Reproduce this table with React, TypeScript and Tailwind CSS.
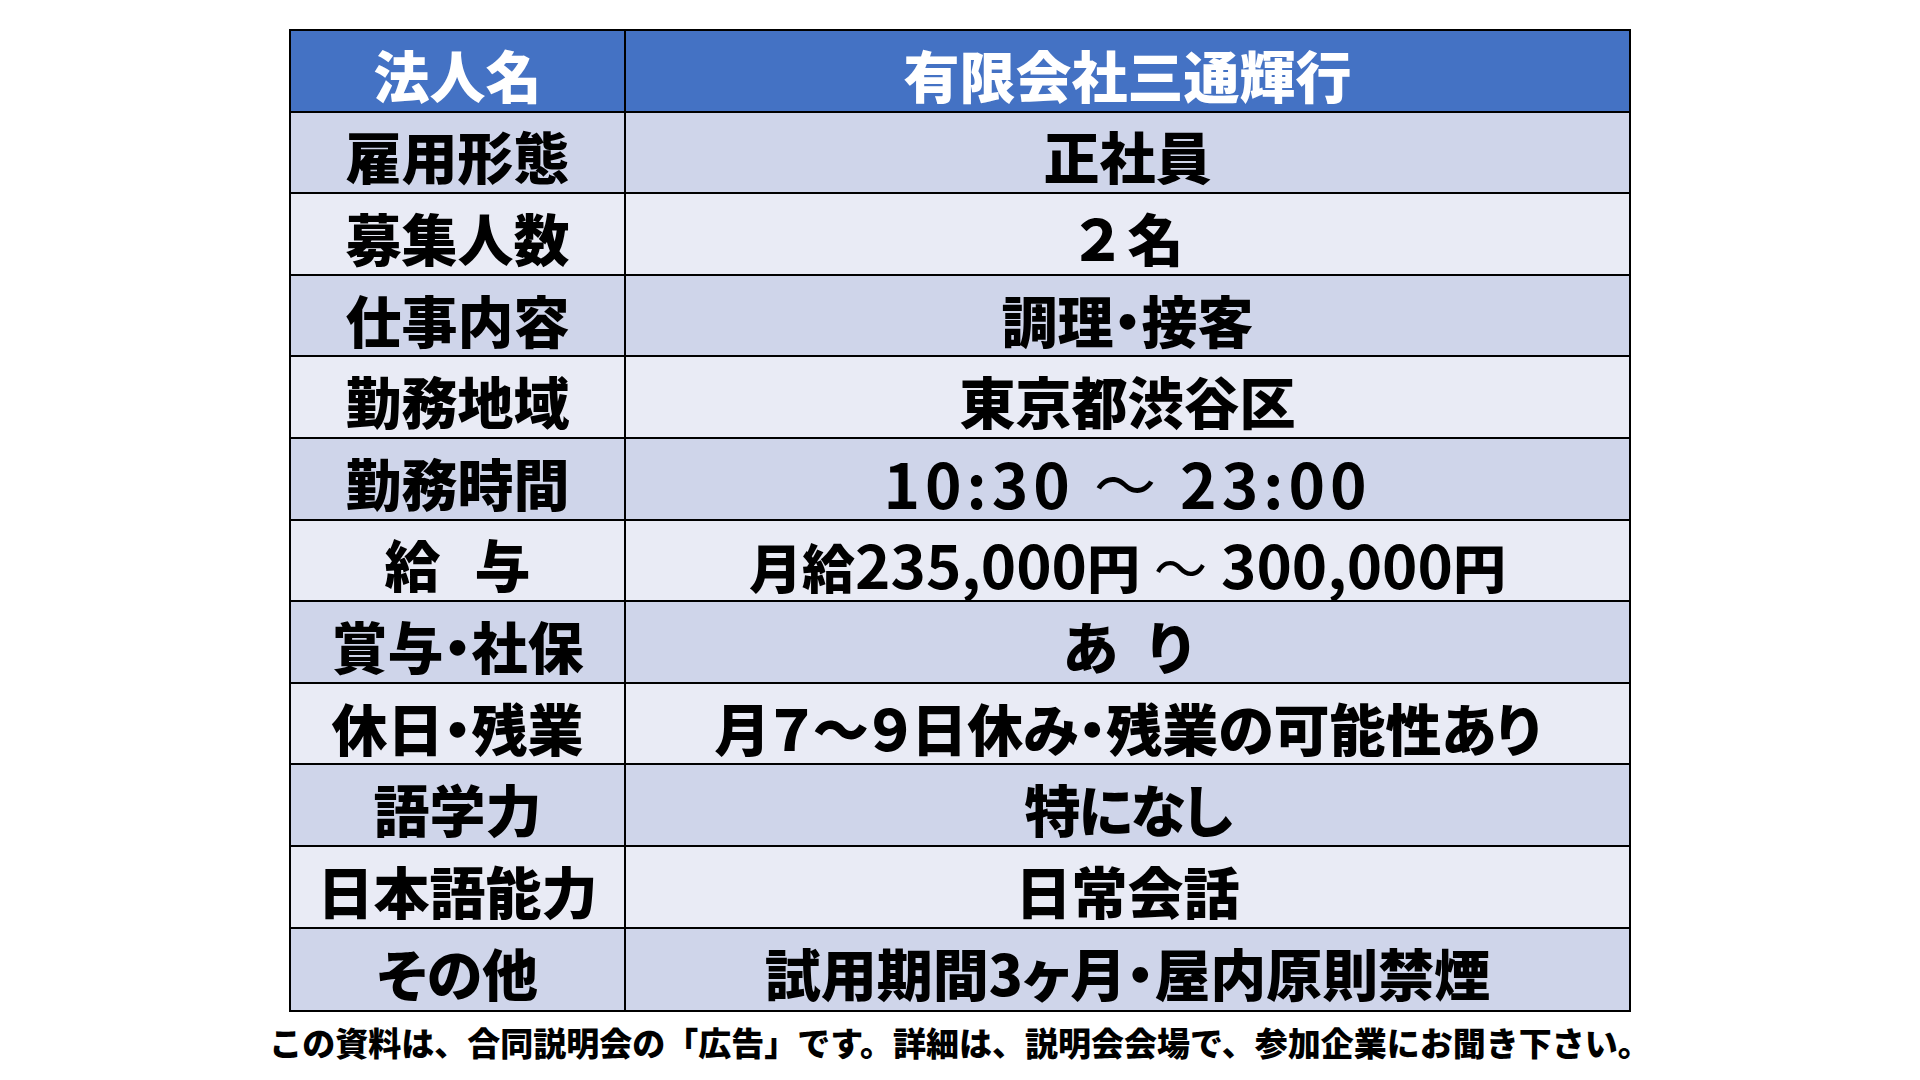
import type { ReactNode } from "react";

type Row = {
  label: ReactNode;
  value: ReactNode;
};

const num = "font-semibold text-[62px] tracking-[5px]";

const rows: Row[] = [
  { label: "雇用形態", value: "正社員" },
  { label: "募集人数", value: <span className="[font-feature-settings:normal] tracking-[2px]">２名</span> },
  { label: "仕事内容", value: "調理・接客" },
  { label: "勤務地域", value: "東京都渋谷区" },
  {
    label: "勤務時間",
    value: (
      <span className={num}>
        10:30 <span className="font-normal">～</span> 23:00
      </span>
    ),
  },
  {
    label: (
      <>
        給<span className="inline-block w-[34px]" />与
      </>
    ),
    value: (
      <span className="text-[53px]">
        月給<span className="font-semibold text-[60px]">235,000</span>円
        <span className="inline-block w-[14px]" />
        <span className="font-normal">～</span>
        <span className="inline-block w-[14px]" />
        <span className="font-semibold text-[60px]">300,000</span>円
      </span>
    ),
  },
  { label: "賞与・社保", value: (
      <>
        あ<span className="inline-block w-[30px]" />り
      </>
    ),
  },
  { label: "休日・残業", value: "月７～９日休み・残業の可能性あり" },
  { label: "語学力", value: <span className="tracking-[-2px]">特になし</span> },
  { label: "日本語能力", value: "日常会話" },
  { label: "その他", value: "試用期間3ヶ月・屋内原則禁煙" },
];

function Cell({ children, className }: { children: ReactNode; className?: string }) {
  return (
    <div className={`flex items-center justify-center pt-[6px] leading-none whitespace-nowrap ${className ?? ""}`}>
      {children}
    </div>
  );
}

export default function App() {
  return (
    <div
      className="w-[1920px] h-[1080px] bg-white overflow-hidden font-black text-black"
      style={{ fontFamily: "'Noto Sans CJK JP', 'Noto Sans', sans-serif" }}
    >
      <div className="ml-[289px] mt-[29px] w-[1342px] border-2 border-black [font-feature-settings:'palt']">
        <div className="grid grid-cols-[335px_1fr] h-[81.6px] bg-[#4472c4] text-white text-[56px] border-b-2 border-black">
          <Cell className="border-r-2 border-black">法人名</Cell>
          <Cell>有限会社三通輝行</Cell>
        </div>
        {rows.map((row, i) => (
          <div
            key={i}
            className={`grid grid-cols-[335px_1fr] h-[81.6px] text-[56px] ${
              i % 2 === 0 ? "bg-[#cfd5ea]" : "bg-[#e9ebf5]"
            } ${i < rows.length - 1 ? "border-b-2 border-black" : ""}`}
          >
            <Cell className="border-r-2 border-black">{row.label}</Cell>
            <Cell>{row.value}</Cell>
          </div>
        ))}
      </div>
      <p className="mt-[14px] text-center text-[33px] leading-none">
        この資料は、合同説明会の「広告」です。詳細は、説明会会場で、参加企業にお聞き下さい。
      </p>
    </div>
  );
}
